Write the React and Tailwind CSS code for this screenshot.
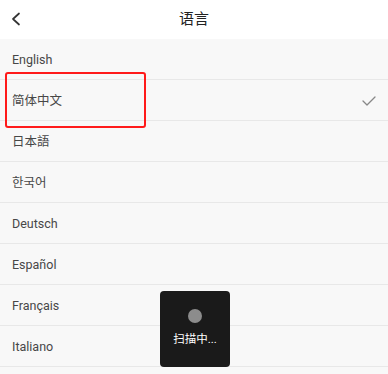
import React from "react";

const langs = ["English", "简体中文", "日本語", "한국어", "Deutsch", "Español", "Français", "Italiano"];

export default function App() {
  return (
    <div
      className="relative w-[388px] h-[374px] overflow-hidden bg-[#f8f8f8] text-[#474747]"
      style={{ fontFamily: 'Roboto, "Noto Sans CJK SC", "Noto Sans CJK JP", "Noto Sans CJK KR", sans-serif' }}
    >
      <div className="relative h-[39px] bg-white flex items-center justify-center">
        <svg className="absolute left-[11px] top-[12px]" width="10" height="14" viewBox="0 0 10 14" fill="none">
          <path d="M8 1.5 L2 7 L8 12.5" stroke="#333" strokeWidth="1.7" strokeLinecap="round" strokeLinejoin="round" />
        </svg>
        <span className="text-[15px] text-[#222]">语言</span>
      </div>
      <div className="flex flex-col">
        {langs.map((l, i) => (
          <div key={l} className="h-[41px] pt-[2px] flex items-center justify-between pl-[12px] pr-[12px] border-b border-[#e8e8e8] text-[12.5px]">
            <span>{l}</span>
            {i === 1 && (
              <svg width="14" height="10" viewBox="0 0 14 10" fill="none">
                <path d="M1 5 L5 9 L13 1" stroke="#888" strokeWidth="1.3" strokeLinecap="round" strokeLinejoin="round" />
              </svg>
            )}
          </div>
        ))}
      </div>
      <div className="absolute left-[5px] top-[72px] w-[141px] h-[56px] border-2 border-[#ff1a1a] rounded-[3px]" />
      <div className="absolute left-[160px] top-[291px] w-[70px] h-[76px] bg-[#1a1a1a] rounded-[4px] flex flex-col items-center">
        <div className="mt-[18px] w-[14px] h-[14px] rounded-full bg-[#8c8c8c]" />
        <div className="mt-[8px] text-[11.5px] text-white">扫描中...</div>
      </div>
    </div>
  );
}
